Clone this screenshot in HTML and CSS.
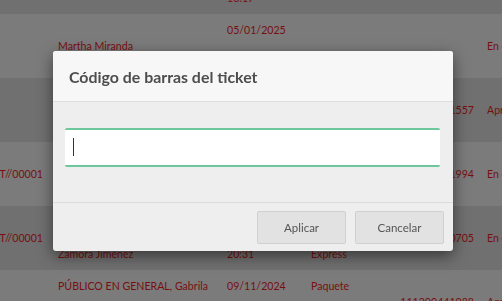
FILE: index.html
```html
<!DOCTYPE html>
<html lang="es">
<head>
    <meta charset="UTF-8">
    <meta name="viewport" content="width=device-width, initial-scale=1.0">
    <title>Tickets</title>
    <link rel="stylesheet" href="styles.css">
</head>
<body>
    <div class="list">
        <table class="tickets">
            <colgroup>
                <col class="c-folio">
                <col class="c-client">
                <col class="c-date">
                <col class="c-type">
                <col class="c-code">
                <col class="c-status">
            </colgroup>
            <tr class="row-dark">
                <td></td>
                <td></td>
                <td>05/01/2025<br>16:17</td>
                <td></td>
                <td></td>
                <td></td>
            </tr>
            <tr class="row-light">
                <td></td>
                <td>Martha Miranda</td>
                <td>05/01/2025<br>16:40</td>
                <td></td>
                <td></td>
                <td>En camino</td>
            </tr>
            <tr class="row-dark">
                <td></td>
                <td></td>
                <td></td>
                <td></td>
                <td>111200441557</td>
                <td>Aprobado</td>
            </tr>
            <tr class="row-light">
                <td>FT//00001</td>
                <td></td>
                <td></td>
                <td></td>
                <td>111200441994</td>
                <td>En camino</td>
            </tr>
            <tr class="row-dark">
                <td>FT//00001</td>
                <td>PÚBLICO EN GENERAL,<br>Zamora Jiménez</td>
                <td>04/01/2025<br>20:31</td>
                <td>Paquete<br>Express</td>
                <td>111200440705</td>
                <td>En camino</td>
            </tr>
            <tr class="row-light">
                <td></td>
                <td>PÚBLICO EN GENERAL, Gabrila<br>Hernández Ruiz</td>
                <td>09/11/2024<br>11:05</td>
                <td>Paquete<br>Normal</td>
                <td>111200441088</td>
                <td>Aprobado</td>
            </tr>
        </table>
    </div>

    <div class="backdrop"></div>

    <div class="modal">
        <div class="modal-header">
            <h2>Código de barras del ticket</h2>
        </div>
        <div class="modal-body">
            <div class="input-wrap">
                <input type="text" class="barcode-input">
                <span class="caret"></span>
            </div>
        </div>
        <div class="modal-footer">
            <button class="btn">Aplicar</button>
            <button class="btn">Cancelar</button>
        </div>
    </div>
</body>
</html>
```

FILE: styles.css
```css
body {
    margin: 0;
    padding: 0;
    font-family: Lato, "Open Sans", sans-serif;
    background-color: #f6f6f6;
    overflow: hidden;
}
.list {
    margin-top: -50px;
    margin-left: -60px;
}
.tickets {
    border-collapse: collapse;
    table-layout: fixed;
    width: 570px;
    font-size: 10.6px;
    line-height: 32px;
    color: #f01f1f;
}
.tickets td {
    height: 64px;
    padding: 0;
    vertical-align: middle;
    white-space: nowrap;
    overflow: hidden;
}
.c-folio { width: 118px; }
.c-client { width: 169px; }
.c-date { width: 84px; }
.c-type { width: 76px; }
.c-code { width: 100px; }
.c-status { width: 23px; }
.tickets td:first-child {
    text-align: right;
    padding-right: 15px;
}
.tickets td:nth-child(5) {
    text-align: right;
    padding-right: 13px;
}
.row-light {
    background-color: #f6f6f6;
}
.row-dark {
    background-color: #e0e0e0;
}
.backdrop {
    position: fixed;
    top: 0;
    left: 0;
    right: 0;
    bottom: 0;
    background-color: rgba(0, 0, 0, 0.5);
}
.modal {
    position: fixed;
    top: 51px;
    left: 53px;
    width: 400px;
    background-color: #efeeee;
    border-radius: 3px;
    box-shadow: 0 5px 15px rgba(0, 0, 0, 0.5);
    overflow: hidden;
}
.modal-header {
    background-color: #f7f7f7;
    border-bottom: 1px solid #dedede;
    height: 50px;
    padding: 0 16px;
    display: flex;
    align-items: center;
}
.modal-header h2 {
    margin: 0;
    font-size: 15.9px;
    font-weight: bold;
    color: #4d4d4d;
}
.modal-body {
    padding: 26px 13px 35px 12px;
    border-bottom: 1px solid #dcdcdc;
}
.input-wrap {
    position: relative;
}
.barcode-input {
    display: block;
    box-sizing: border-box;
    width: 100%;
    height: 39px;
    border: none;
    border-top: 2px solid #6dc79a;
    border-bottom: 2px solid #6dc79a;
    border-radius: 2px;
    background-color: #fff;
    padding: 0 8px;
    font-family: Lato, sans-serif;
    font-size: 15px;
    color: #333;
    caret-color: transparent;
    outline: none;
}
.caret {
    position: absolute;
    left: 8px;
    top: 10px;
    width: 1px;
    height: 18px;
    background-color: #333;
}
.modal-footer {
    display: flex;
    justify-content: flex-end;
    gap: 9px;
    padding: 8px 9px 7px;
}
.btn {
    width: 89px;
    height: 33px;
    background-color: #e3e2e2;
    border: 1px solid #d0d0d0;
    border-radius: 2px;
    font-family: Lato, sans-serif;
    font-size: 11.5px;
    color: #555;
    cursor: pointer;
}
.btn:hover {
    background-color: #d8d8d8;
}
```
